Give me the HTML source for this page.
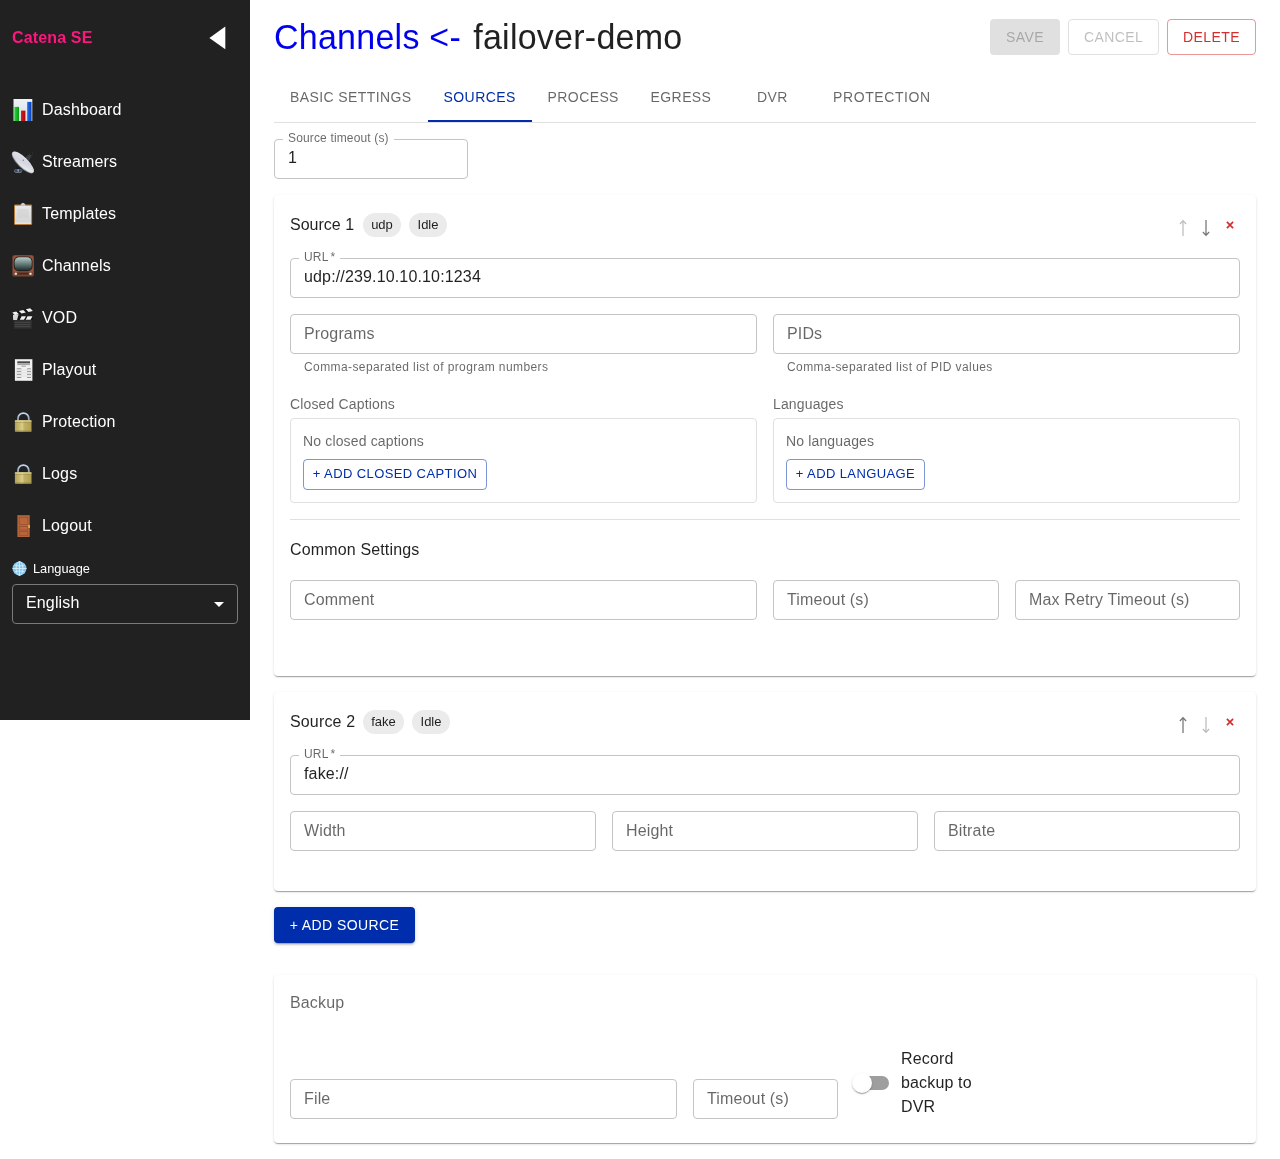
<!DOCTYPE html>
<html>
<head>
<meta charset="utf-8">
<title>Catena SE</title>
<style>
*{box-sizing:border-box;}
html,body{margin:0;padding:0;}
body{width:1280px;height:1159px;background:#fff;font-family:"Liberation Sans",sans-serif;color:rgba(0,0,0,0.87);position:relative;overflow:hidden;}
.abs{position:absolute;}
/* sidebar */
#side{will-change:transform;position:absolute;left:0;top:0;width:250px;height:720px;background:#212121;color:#fff;}
#brand{position:absolute;left:12px;top:29px;letter-spacing:0.15px;font-size:16px;font-weight:bold;color:#ff157e;line-height:18px;}
#tri{position:absolute;left:209px;top:26px;}
.mi{position:absolute;left:0;width:250px;height:52px;}
.mi .ic{position:absolute;left:11px;top:14px;width:24px;height:24px;overflow:visible;}
.mi .tx{position:absolute;left:42px;top:18px;font-size:16px;line-height:18px;letter-spacing:0.15px;color:#fff;white-space:nowrap;}
#langlbl{position:absolute;left:33px;top:561px;font-size:12.800px;line-height:15px;color:#fff;}
#langsel{position:absolute;left:12px;top:584px;width:226px;height:40px;border:1px solid #7a7a7a;border-radius:4px;}
#langsel span{position:absolute;left:13px;top:9px;font-size:16px;line-height:18px;letter-spacing:0.15px;color:#fff;}
/* main */
#title{position:absolute;left:274px;top:17px;font-size:34px;line-height:40px;letter-spacing:0.25px;white-space:nowrap;color:#212121;transform-origin:0 31.800px;transform:translateY(0.400px) scaleY(1.045);}
#title a{color:#0000ee;text-decoration:none;margin-right:2.500px;}
.btn{position:absolute;height:36px;border-radius:4px;font-size:14px;line-height:34px;text-align:center;letter-spacing:0.4px;white-space:nowrap;}
.tab{position:absolute;top:89px;font-size:14px;line-height:16px;letter-spacing:0.4px;color:rgba(0,0,0,0.6);white-space:nowrap;}
.card{position:absolute;left:274px;width:982px;background:#fff;border-radius:4px;box-shadow:0 2px 1px -1px rgba(0,0,0,0.2),0 1px 1px 0 rgba(0,0,0,0.14),0 1px 3px 0 rgba(0,0,0,0.12);}
.fld{position:absolute;height:40px;border:1px solid #c4c4c4;border-radius:4px;background:#fff;}
.fld .ph{position:absolute;left:13px;top:10px;font-size:16px;line-height:18px;letter-spacing:0.15px;color:rgba(0,0,0,0.6);white-space:nowrap;}
.fld .val{position:absolute;left:13px;top:9px;font-size:16px;line-height:18px;letter-spacing:0.15px;color:rgba(0,0,0,0.87);white-space:nowrap;}
.fld .lbl{position:absolute;left:8px;top:-9px;padding:0 5px;background:#fff;font-size:12px;line-height:14px;letter-spacing:0.15px;color:rgba(0,0,0,0.6);white-space:nowrap;}
.h16{position:absolute;font-size:16px;line-height:18px;letter-spacing:0.15px;white-space:nowrap;}
.chip{position:absolute;height:24px;border-radius:12px;background:#ebebeb;font-size:13px;line-height:24px;padding:0;text-align:center;color:rgba(0,0,0,0.87);white-space:nowrap;}
.help{position:absolute;font-size:12px;line-height:14px;color:rgba(0,0,0,0.6);letter-spacing:0.4px;white-space:nowrap;}
.sub{position:absolute;font-size:14px;line-height:16px;letter-spacing:0.15px;color:rgba(0,0,0,0.6);white-space:nowrap;}
.box{position:absolute;border:1px solid #e0e0e0;border-radius:4px;}
.obtn{position:absolute;height:31px;border:1px solid rgba(0,45,171,0.5);border-radius:4px;color:#002dab;font-size:13px;line-height:27px;letter-spacing:0.4px;text-align:center;white-space:nowrap;}
.arr{position:absolute;font-size:18px;line-height:20px;}
#main{position:absolute;left:0;top:0;width:1280px;height:1159px;will-change:transform;}
</style>
</head>
<body>
<div id="side">
  <div id="brand">Catena SE</div>
  <svg id="tri" width="17" height="24" viewBox="0 0 17 24"><path d="M16.3 0.6 L16.3 23.2 L0.4 11.9 Z" fill="#fff"/></svg>
  <div class="mi" style="top:83px"><svg class="ic" viewBox="0 0 24 24"><defs><linearGradient id="gD" x1="0" y1="0" x2="0" y2="1"><stop offset="0" stop-color="#eef3f6"/><stop offset="1" stop-color="#d4dde3"/></linearGradient><linearGradient id="gG" x1="0" y1="0" x2="1" y2="0"><stop offset="0" stop-color="#27d535"/><stop offset="1" stop-color="#069a14"/></linearGradient><linearGradient id="gR" x1="0" y1="0" x2="1" y2="0"><stop offset="0" stop-color="#e3191c"/><stop offset="1" stop-color="#a80a0d"/></linearGradient><linearGradient id="gB" x1="0" y1="0" x2="1" y2="0"><stop offset="0" stop-color="#1f6ff0"/><stop offset="1" stop-color="#0a3fb4"/></linearGradient></defs><rect x="2.500" y="2" width="18.800" height="22" fill="url(#gD)"/><rect x="3.400" y="9.900" width="4.600" height="14.100" fill="url(#gG)"/><rect x="10" y="13.600" width="4.400" height="10.400" fill="url(#gR)"/><rect x="16.200" y="4.900" width="4.300" height="19.100" fill="url(#gB)"/></svg><span class="tx">Dashboard</span></div>
  <div class="mi" style="top:135px"><svg class="ic" viewBox="0 0 24 24"><defs><linearGradient id="gS" x1="0" y1="0" x2="1" y2="1"><stop offset="0" stop-color="#e4e6ec"/><stop offset="0.500" stop-color="#d3d6de"/><stop offset="1" stop-color="#f3f4f7"/></linearGradient></defs><path d="M5.200 16.500L7.800 18.800L7.600 21L5.600 21Z" fill="#161b22"/><ellipse cx="7.200" cy="21.900" rx="4.100" ry="1.900" fill="#8d9096"/><ellipse cx="7.200" cy="21.400" rx="3.900" ry="1.500" fill="#2c4a75"/><rect x="6.400" y="20.300" width="1.600" height="2.200" fill="#9aa0a8"/><path d="M13.300 9.200L19.300 4.400L21 3.200L21.900 4.300L20.800 6.400L17.600 12.600Z" fill="#3a3e44"/><path d="M19 5L20.800 3.600L21.300 4.400L20 6.500Z" fill="#15171a"/><ellipse cx="11.700" cy="13.500" rx="14.500" ry="5.100" transform="rotate(44.600 11.600 13.600)" fill="#8e9197"/><ellipse cx="12.100" cy="13.100" rx="14.400" ry="4.700" transform="rotate(44.600 12.100 13.100)" fill="url(#gS)"/><circle cx="12.300" cy="11.200" r="0.700" fill="#7c8088"/></svg><span class="tx">Streamers</span></div>
  <div class="mi" style="top:187px"><svg class="ic" viewBox="0 0 24 24"><defs><linearGradient id="gT" x1="0" y1="0" x2="0" y2="1"><stop offset="0" stop-color="#e9e9e9"/><stop offset="1" stop-color="#d3d3d3"/></linearGradient></defs><rect x="3" y="3.600" width="18.100" height="20.400" rx="1.200" fill="#b57a35"/><rect x="4" y="4.700" width="16.100" height="18" fill="url(#gT)"/><rect x="4" y="21.700" width="16.100" height="1" fill="#f4f4f4"/><path d="M9 4.800L10.500 2.600L12 1.700L13.500 2.600L15 4.800Z" fill="#c9ced4"/><rect x="6.500" y="8" width="11" height="9" fill="#d0d0d0" opacity="0.600"/></svg><span class="tx">Templates</span></div>
  <div class="mi" style="top:239px"><svg class="ic" viewBox="0 0 24 24"><defs><linearGradient id="gV" x1="0" y1="0" x2="0" y2="1"><stop offset="0" stop-color="#b9cdc9"/><stop offset="0.450" stop-color="#6f8683"/><stop offset="1" stop-color="#1f2a2a"/></linearGradient></defs><rect x="1.300" y="2.100" width="21.700" height="21.400" rx="2.600" fill="#7a4434"/><rect x="2" y="2.800" width="20.300" height="20" rx="2.200" fill="#94523d"/><rect x="2.800" y="3.500" width="18.700" height="14.800" rx="5" fill="#1c1c1c"/><rect x="3.600" y="4.200" width="17.100" height="13.400" rx="4.600" fill="url(#gV)"/><rect x="2.600" y="19" width="19.100" height="3.400" rx="1" fill="#6b3a2c"/><circle cx="4.800" cy="20.700" r="1.300" fill="#e6dcc0"/><circle cx="19.500" cy="20.700" r="1.300" fill="#e6dcc0"/><rect x="7.500" y="20" width="9.300" height="1.500" fill="#4a2a20"/></svg><span class="tx">Channels</span></div>
  <div class="mi" style="top:291px"><svg class="ic" viewBox="0 0 24 24"><rect x="2.800" y="15" width="18.100" height="8.750" fill="#2e2e2e"/><path d="M3.600 17.300h16M3.600 19.700h16M3.600 21.700h16" stroke="#4d4d4d" stroke-width="0.900"/><rect x="2.200" y="10.900" width="19.700" height="4.100" fill="#151515"/><path d="M10.600 11.200L15 11.200L13 14.800L8.750 14.800ZM16.500 11.200L21.500 11.200L19.500 14.800L14.700 14.800Z" fill="#f2f2f2"/><path d="M1.250 7.500L21.250 2.800L21.900 5.900L1.900 10.600Z" fill="#151515"/><path d="M1.250 7.500L5.250 6.560L7.900 9.190L3.900 10.130ZM7.850 5.950L12.250 4.900L14.900 7.500L10.500 8.600ZM14.850 4.300L19.250 3.270L21.900 5.900L17.500 6.930Z" fill="#f2f2f2"/><path d="M1.900 9.700L7.500 9.700L6 15L2.200 15Z" fill="#d4d8dc"/></svg><span class="tx">VOD</span></div>
  <div class="mi" style="top:343px"><svg class="ic" viewBox="0 0 24 24"><rect x="3.900" y="2.200" width="17.500" height="21.600" fill="#f1f1f1"/><rect x="6.300" y="4.300" width="12.700" height="2.100" fill="#4a4a4a"/><path d="M6.300 7.600h12.700" stroke="#777" stroke-width="0.700"/><path d="M10.500 9.200h4.300" stroke="#8a8a8a" stroke-width="0.800"/><path d="M5.800 11.800h4.500M16 11.800h4M5.800 14.600h4.500M16 14.600h4M5.800 17.400h4.500M16 17.400h4M5.800 20.500h4.500M16 20.500h4" stroke="#8d8d8d" stroke-width="0.900"/><path d="M4.500 13.200h16.300M4.500 16h16.300M4.500 19h16.300" stroke="#d2d2d2" stroke-width="0.600"/></svg><span class="tx">Playout</span></div>
  <div class="mi" style="top:395px"><svg class="ic" viewBox="0 0 24 24"><defs><linearGradient id="gL" x1="0" y1="0" x2="1" y2="0"><stop offset="0" stop-color="#b3a254"/><stop offset="0.450" stop-color="#d9cd8a"/><stop offset="0.550" stop-color="#c2b266"/><stop offset="1" stop-color="#b09e4f"/></linearGradient><linearGradient id="gK" x1="0" y1="0" x2="0" y2="1"><stop offset="0" stop-color="#c3d6ee"/><stop offset="1" stop-color="#7f93ad"/></linearGradient></defs><path d="M7 12V9.500a5.400 5.400 0 0 1 10.800 0V12" fill="none" stroke="url(#gK)" stroke-width="1.800"/><rect x="3.900" y="11.300" width="16.600" height="11.400" rx="0.800" fill="url(#gL)"/><rect x="3.900" y="11.300" width="16.600" height="1.300" fill="#e3d99c" opacity="0.800"/><rect x="3.900" y="13.200" width="16.600" height="0.600" fill="#8f7f3a" opacity="0.600"/><rect x="3.900" y="21.500" width="16.600" height="1.200" fill="#8f7f3a" opacity="0.700"/></svg><span class="tx">Protection</span></div>
  <div class="mi" style="top:447px"><svg class="ic" viewBox="0 0 24 24"><defs><linearGradient id="gL2" x1="0" y1="0" x2="1" y2="0"><stop offset="0" stop-color="#b3a254"/><stop offset="0.450" stop-color="#d9cd8a"/><stop offset="0.550" stop-color="#c2b266"/><stop offset="1" stop-color="#b09e4f"/></linearGradient><linearGradient id="gK2" x1="0" y1="0" x2="0" y2="1"><stop offset="0" stop-color="#c3d6ee"/><stop offset="1" stop-color="#7f93ad"/></linearGradient></defs><path d="M7 12V9.500a5.400 5.400 0 0 1 10.800 0V12" fill="none" stroke="url(#gK2)" stroke-width="1.800"/><rect x="3.900" y="11.300" width="16.600" height="11.400" rx="0.800" fill="url(#gL2)"/><rect x="3.900" y="11.300" width="16.600" height="1.300" fill="#e3d99c" opacity="0.800"/><rect x="3.900" y="13.200" width="16.600" height="0.600" fill="#8f7f3a" opacity="0.600"/><rect x="3.900" y="21.500" width="16.600" height="1.200" fill="#8f7f3a" opacity="0.700"/></svg><span class="tx">Logs</span></div>
  <div class="mi" style="top:499px"><svg class="ic" viewBox="0 0 24 24"><rect x="6.200" y="2" width="12.700" height="21.900" fill="#9a5230"/><rect x="7" y="2.800" width="11.100" height="21.100" fill="#b8673d"/><rect x="8.300" y="4.300" width="8.500" height="7.200" fill="none" stroke="#99512f" stroke-width="0.800"/><rect x="8.300" y="13.400" width="8.500" height="3.700" fill="none" stroke="#99512f" stroke-width="0.800"/><rect x="8.300" y="18.600" width="8.500" height="3.700" fill="none" stroke="#99512f" stroke-width="0.800"/><rect x="17.300" y="12" width="1.600" height="3" fill="#e4b93a"/></svg><span class="tx">Logout</span></div>
  <svg class="abs" style="left:12px;top:561px" width="15" height="15" viewBox="0 0 15 15"><circle cx="7.500" cy="7.500" r="7" fill="#7fc4ea"/><path d="M0.500 7.500h14M7.500 0.500v14M2.300 3.800c3 1.600 7.400 1.600 10.400 0M2.300 11.200c3-1.600 7.400-1.600 10.400 0" stroke="#d9eefb" stroke-width="0.900" fill="none"/><ellipse cx="7.500" cy="7.500" rx="3.400" ry="7" fill="none" stroke="#d9eefb" stroke-width="0.900"/></svg>
  <div id="langlbl">Language</div>
  <div id="langsel"><span>English</span><svg class="abs" style="left:201px;top:17px" width="10" height="5" viewBox="0 0 10 5"><path d="M0 0h10L5 5z" fill="#fff"/></svg></div>
</div>
<div id="main">
  <div id="title"><a>Channels &lt;-</a> failover-demo</div>
  <div class="btn" style="left:990px;top:19px;width:70px;background:#e0e0e0;color:rgba(0,0,0,0.26);line-height:36px;">SAVE</div>
  <div class="btn" style="left:1068px;top:19px;width:91px;border:1px solid #e0e0e0;color:rgba(0,0,0,0.26);">CANCEL</div>
  <div class="btn" style="left:1167px;top:19px;width:89px;border:1px solid rgba(211,47,47,0.5);color:#d32f2f;">DELETE</div>

  <div class="tab" style="left:290px">BASIC SETTINGS</div>
  <div class="tab" style="left:443.600px;color:#002dab">SOURCES</div>
  <div class="tab" style="left:547.600px">PROCESS</div>
  <div class="tab" style="left:650.600px">EGRESS</div>
  <div class="tab" style="left:757px">DVR</div>
  <div class="tab" style="left:833px;letter-spacing:0.600px">PROTECTION</div>
  <div class="abs" style="left:274px;top:122px;width:982px;height:1px;background:#e0e0e0"></div>
  <div class="abs" style="left:428px;top:120px;width:104px;height:2px;background:#002dab"></div>

  <div class="fld" style="left:274px;top:139px;width:194px"><span class="lbl">Source timeout (s)</span><span class="val">1</span></div>

  <div class="card" style="top:195px;height:481px">
    <div class="h16" style="left:16px;top:21px;letter-spacing:0">Source 1</div>
    <div class="chip" style="left:89px;top:18px;width:38px">udp</div>
    <div class="chip" style="left:135px;top:18px;width:38px">Idle</div>
    <svg class="abs" style="left:903px;top:23px" width="12" height="20" viewBox="0 0 12 20"><path d="M6 2.600V18M2.900 6L6 2.600L9.100 6" fill="none" stroke="#bdbdbd" stroke-width="1.250"/></svg>
    <svg class="abs" style="left:926px;top:23px" width="12" height="20" viewBox="0 0 12 20"><path d="M6 2V17.400M2.900 14L6 17.400L9.100 14" fill="none" stroke="#757575" stroke-width="1.250"/></svg>
    <svg class="abs" style="left:950.700px;top:25px" width="10" height="10" viewBox="0 0 10 10"><path d="M1.900 1.900L8.100 8.100M8.100 1.900L1.900 8.100" stroke="#d32f2f" stroke-width="1.700"/></svg>
    <div class="fld" style="left:16px;top:63px;width:950px"><span class="lbl">URL<i style="margin-left:2px;font-style:normal">*</i></span><span class="val">udp://239.10.10.10:1234</span></div>
    <div class="fld" style="left:16px;top:119px;width:467px"><span class="ph">Programs</span></div>
    <div class="fld" style="left:499px;top:119px;width:467px"><span class="ph">PIDs</span></div>
    <div class="help" style="left:30px;top:165px">Comma-separated list of program numbers</div>
    <div class="help" style="left:513px;top:165px">Comma-separated list of PID values</div>
    <div class="sub" style="left:16px;top:201px">Closed Captions</div>
    <div class="sub" style="left:499px;top:201px">Languages</div>
    <div class="box" style="left:16px;top:223px;width:467px;height:85px"></div>
    <div class="box" style="left:499px;top:223px;width:467px;height:85px"></div>
    <div class="sub" style="left:29px;top:238px">No closed captions</div>
    <div class="sub" style="left:512px;top:238px">No languages</div>
    <div class="obtn" style="left:29px;top:264px;width:184px">+ ADD CLOSED CAPTION</div>
    <div class="obtn" style="left:512px;top:264px;width:139px">+ ADD LANGUAGE</div>
    <div class="abs" style="left:16px;top:324px;width:950px;height:1px;background:#e0e0e0"></div>
    <div class="h16" style="left:16px;top:346px">Common Settings</div>
    <div class="fld" style="left:16px;top:385px;width:467px"><span class="ph">Comment</span></div>
    <div class="fld" style="left:499px;top:385px;width:226px"><span class="ph">Timeout (s)</span></div>
    <div class="fld" style="left:741px;top:385px;width:225px"><span class="ph">Max Retry Timeout (s)</span></div>
  </div>

  <div class="card" style="top:692px;height:199px">
    <div class="h16" style="left:16px;top:21px">Source 2</div>
    <div class="chip" style="left:89px;top:18px;width:41px;line-height:23px">fake</div>
    <div class="chip" style="left:138px;top:18px;width:38px;line-height:23px">Idle</div>
    <svg class="abs" style="left:903px;top:23px" width="12" height="20" viewBox="0 0 12 20"><path d="M6 2.600V18M2.900 6L6 2.600L9.100 6" fill="none" stroke="#757575" stroke-width="1.250"/></svg>
    <svg class="abs" style="left:926px;top:23px" width="12" height="20" viewBox="0 0 12 20"><path d="M6 2V17.400M2.900 14L6 17.400L9.100 14" fill="none" stroke="#bdbdbd" stroke-width="1.250"/></svg>
    <svg class="abs" style="left:950.700px;top:25px" width="10" height="10" viewBox="0 0 10 10"><path d="M1.900 1.900L8.100 8.100M8.100 1.900L1.900 8.100" stroke="#d32f2f" stroke-width="1.700"/></svg>
    <div class="fld" style="left:16px;top:63px;width:950px"><span class="lbl">URL<i style="margin-left:2px;font-style:normal">*</i></span><span class="val">fake://</span></div>
    <div class="fld" style="left:16px;top:119px;width:306px"><span class="ph">Width</span></div>
    <div class="fld" style="left:338px;top:119px;width:306px"><span class="ph">Height</span></div>
    <div class="fld" style="left:660px;top:119px;width:306px"><span class="ph">Bitrate</span></div>
  </div>
  <div class="abs" style="left:274px;top:907px;width:141px;height:36px;border-radius:4px;background:#002dab;color:#fff;font-size:14px;line-height:36px;letter-spacing:0.4px;text-align:center;box-shadow:0 3px 1px -2px rgba(0,0,0,0.2),0 2px 2px 0 rgba(0,0,0,0.14),0 1px 5px 0 rgba(0,0,0,0.12);">+ ADD SOURCE</div>
  <div class="card" style="top:975px;height:168px">
    <div class="h16" style="left:16px;top:19px;color:rgba(0,0,0,0.6)">Backup</div>
    <div class="fld" style="left:16px;top:104px;width:387px"><span class="ph">File</span></div>
    <div class="fld" style="left:419px;top:104px;width:145px"><span class="ph">Timeout (s)</span></div>
    <div class="abs" style="left:581px;top:101px;width:34px;height:14px;border-radius:7px;background:#9e9e9e"></div>
    <div class="abs" style="left:578px;top:98px;width:20px;height:20px;border-radius:10px;background:#fff;box-shadow:0 2px 1px -1px rgba(0,0,0,0.2),0 1px 1px 0 rgba(0,0,0,0.14),0 1px 3px 0 rgba(0,0,0,0.12);"></div>
    <div class="abs" style="left:627px;top:72px;width:90px;font-size:16px;line-height:24px;letter-spacing:0.15px;">Record backup to DVR</div>
  </div>
</div>
</body>
</html>
